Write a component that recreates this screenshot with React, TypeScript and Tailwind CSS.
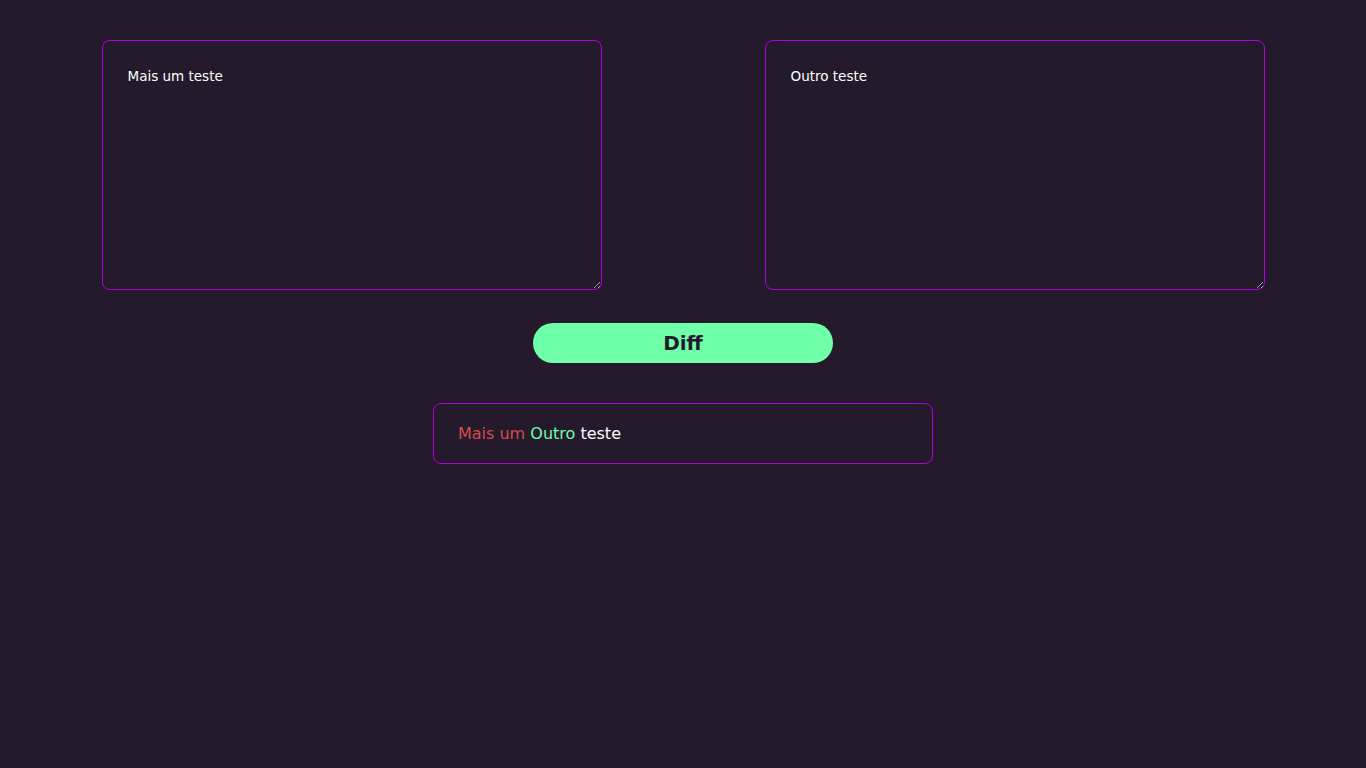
import { useState } from "react"

export default function App() {
  const [left, setLeft] = useState("Mais um teste")
  const [right, setRight] = useState("Outro teste")

  return (
    <div className="min-h-screen bg-[#251a2c] pt-10 font-['DejaVu_Sans',sans-serif] text-white">
      <div className="mx-auto flex w-[1163px] justify-between">
        <textarea
          value={left}
          onChange={(e) => setLeft(e.target.value)}
          className="h-[250px] w-[500px] rounded-lg border border-[#b100e8] bg-[#251a2c] px-[25px] py-[25px] text-[13.5px] text-white outline-none"
        />
        <textarea
          value={right}
          onChange={(e) => setRight(e.target.value)}
          className="h-[250px] w-[500px] rounded-lg border border-[#b100e8] bg-[#251a2c] px-[25px] py-[25px] text-[13.5px] text-white outline-none"
        />
      </div>
      <div className="mt-[33px] flex justify-center">
        <button className="h-10 w-[300px] rounded-full bg-[#6effa8] text-xl font-bold text-[#251a2c]">
          Diff
        </button>
      </div>
      <div className="mt-10 flex justify-center">
        <div className="flex h-[61px] w-[500px] items-center rounded-lg border border-[#b100e8] px-[24px] text-base">
          <span className="text-[#d24d4d]">Mais um</span>
          <span>&nbsp;</span>
          <span className="text-[#6effa8]">Outro</span>
          <span>&nbsp;teste</span>
        </div>
      </div>
    </div>
  )
}
